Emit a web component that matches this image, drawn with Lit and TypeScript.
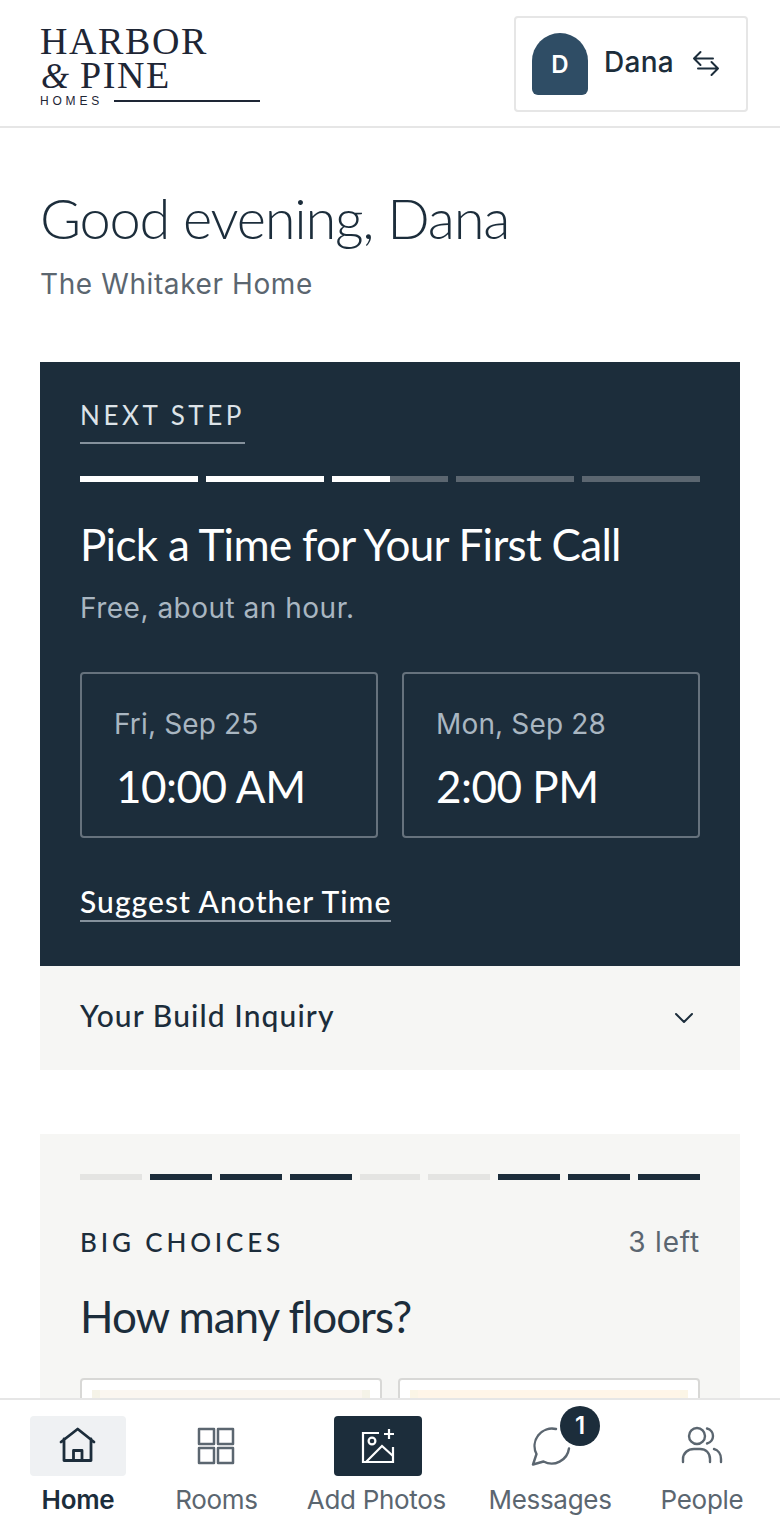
import { LitElement, html, css } from "lit";
import { customElement } from "lit/decorators.js";

const seg = (fill: number) => html`<span class="seg"><i style="width:${fill}%"></i></span>`;

@customElement("app-root")
export class AppRoot extends LitElement {
  static styles = css`
    :host { display: flex; flex-direction: column; height: 100vh; overflow: hidden; background: #fff; color: #1c2d3b; font-family: Inter, "Noto Sans", sans-serif; }
    * { box-sizing: border-box; }
    header { flex: none; height: 128px; border-bottom: 2px solid #e6e6e6; display: flex; justify-content: space-between; padding: 16px 32px 0 40px; }
    .logo { font-family: "Liberation Serif", serif; color: #1e2635; font-size: 38px; line-height: 34px; padding-top: 8px; width: 220px; letter-spacing: 1.6px; }
    .logo div:first-child, .logo .line { height: 34px; white-space: nowrap; }
    .logo em { font-size: 36px; margin: 0 11px 0 1px; letter-spacing: 0; }
    .logo-sub { display: flex; align-items: center; gap: 11px; font: 400 12px/14px "Liberation Sans", sans-serif; letter-spacing: 3.8px; margin-top: 2px; }
    .logo-sub::after { content: ""; flex: 1; height: 2px; background: #1e2635; }
    .chip { width: 234px; height: 96px; border: 2px solid #e6e6e6; border-radius: 4px; display: flex; align-items: center; padding: 0 16px; }
    .avatar { width: 56px; height: 62px; border-radius: 28px 28px 6px 6px; background: #2f4d65; color: #fff; display: flex; align-items: center; justify-content: center; font-size: 24px; font-weight: 600; }
    .chip b { font-size: 28px; font-weight: 500; margin: -4px 0 0 16px; letter-spacing: 0.3px; }
    .chip svg { margin-left: 18px; }
    main { flex: 1; min-height: 0; overflow: hidden; padding: 0 40px; }
    h1 { font: 300 56px/68px Lato, sans-serif; margin: 56px 0 0; letter-spacing: -1.25px; }
    .home { font-size: 28px; line-height: 40px; color: #5b6670; margin-top: 12px; letter-spacing: 0.6px; }
    .next { background: #1c2d3b; margin-top: 58px; padding: 38px 40px 44px; color: #fff; height: 604px; }
    .eyebrow { display: inline-block; font: 400 26px/30px Lato, sans-serif; letter-spacing: 3.55px; color: #dde3e8; padding-bottom: 12px; border-bottom: 2px solid #85919c; }
    .bars { display: grid; gap: 8px; margin-top: 32px; }
    .bars.five { grid-template-columns: 118px 118px 116px 118px 118px; }
    .bars.nine { grid-template-columns: 62px 62px 62px 62px 60px 62px 62px 62px 62px; }
    .seg { height: 6px; background: #5b6670; display: block; }
    .seg i { display: block; height: 100%; background: #fff; }
    .next h2 { font: 400 44px/56px Lato, sans-serif; margin: 34px 0 0; letter-spacing: -0.7px; }
    .next p { font-size: 28px; line-height: 40px; color: #a9b6c1; margin: 16px 0 0; letter-spacing: 0.5px; }
    .times { display: grid; grid-template-columns: 1fr 1fr; gap: 24px; margin-top: 44px; }
    .time { height: 166px; border: 2px solid #66727d; border-radius: 4px; padding: 32px; display: flex; flex-direction: column; }
    .time span { font-size: 28px; line-height: 36px; color: #a9b6c1; letter-spacing: 0.15px; }
    .time strong { font: 400 44px/56px Lato, sans-serif; margin-top: 16px; letter-spacing: -0.5px; }
    .time:first-child strong { margin-left: 2px; }
    .suggest { display: inline-block; font: 500 30px/38px Lato, sans-serif; letter-spacing: 1.05px; margin-top: 44px; border-bottom: 2px solid #85919c; }
    .acc { height: 104px; background: #f6f6f4; display: flex; align-items: center; justify-content: space-between; padding: 0 46px 0 40px; font: 500 30px/38px Lato, sans-serif; letter-spacing: 1.1px; }
    .acc span { margin-top: -6px; }
    .choices { background: #f6f6f4; margin-top: 64px; padding: 40px; }
    .choices .bars { margin-top: 0; }
    .choices .seg { background: #e4e4e2; }
    .choices .seg.on { background: #1c2d3b; }
    .row { display: flex; justify-content: space-between; align-items: center; margin-top: 44px; }
    .row b { font: 500 26px/36px Lato, sans-serif; letter-spacing: 3.85px; }
    .row span { font-size: 28px; line-height: 36px; color: #5b6670; letter-spacing: 0.8px; }
    .choices h3 { font: 400 44px/56px Lato, sans-serif; margin: 28px 0 0; letter-spacing: -1px; }
    .opts { display: grid; grid-template-columns: 1fr 1fr; gap: 16px; margin-top: 34px; }
    .opt { border: 2px solid #d8d8d6; border-radius: 4px; background: #fff; padding: 10px; height: 300px; }
    .pic { height: 200px; border: solid #f5f3e8; border-width: 0 8px; background: #fbf6f0; }
    .pic.warm { border-color: #fbf5e6; background: #fff5e8; }
    nav { flex: none; height: 128px; background: #fff; border-top: 2px solid #e6e6e6; display: flex; justify-content: space-between; padding: 16px 30px 0; }
    .tab { min-width: 96px; display: flex; flex-direction: column; align-items: center; font-size: 26px; line-height: 36px; color: #5b6670; white-space: nowrap; letter-spacing: -0.3px; }
    .ic { position: relative; width: 96px; height: 60px; border-radius: 4px; display: flex; align-items: center; justify-content: center; margin-bottom: 6px; }
    .tab.on { color: #1c2d3b; font-weight: 600; }
    .tab.on .ic { background: #eff1f3; }
    .ic.dark { width: 88px; background: #1c2d3b; margin-left: 4px; }
    .badge { position: absolute; left: 58px; top: -10px; width: 40px; height: 40px; border-radius: 50%; background: #1c2d3b; color: #fff; display: flex; align-items: center; justify-content: center; font-size: 24px; font-weight: 600; letter-spacing: 0; }
    svg { display: block; fill: none; }
  `;

  render() {
    return html`
      <header>
        <div class="logo">
          <div class="line">HARBOR</div>
          <div class="line"><em>&amp;</em>PINE</div>
          <div class="logo-sub">HOMES</div>
        </div>
        <div class="chip">
          <div class="avatar">D</div>
          <b>Dana</b>
          <svg width="30" height="30" viewBox="0 0 30 30" stroke="#1c2d3b" stroke-width="2" stroke-linecap="round" stroke-linejoin="round">
            <path d="M21 9.500H2M8.500 3 2 9.500 8.500 16" />
            <path d="M6 19.500h20M19.500 13 26 19.500 19.500 26" />
          </svg>
        </div>
      </header>
      <main>
        <h1>Good evening, Dana</h1>
        <div class="home">The Whitaker Home</div>
        <section class="next">
          <div class="eyebrow">NEXT STEP</div>
          <div class="bars five">${[100, 100, 50, 0, 0].map(seg)}</div>
          <h2>Pick a Time for Your First Call</h2>
          <p>Free, about an hour.</p>
          <div class="times">
            <div class="time"><span>Fri, Sep 25</span><strong>10:00 AM</strong></div>
            <div class="time"><span>Mon, Sep 28</span><strong>2:00 PM</strong></div>
          </div>
          <a class="suggest">Suggest Another Time</a>
        </section>
        <div class="acc"><span>Your Build Inquiry</span>
          <svg width="20" height="12" viewBox="0 0 20 12" stroke="#1c2d3b" stroke-width="2" stroke-linecap="round" stroke-linejoin="round"><path d="M2 2l8 8 8-8" /></svg>
        </div>
        <section class="choices">
          <div class="bars nine">${[0, 1, 1, 1, 0, 0, 1, 1, 1].map((o) => html`<span class="seg ${o ? "on" : ""}"></span>`)}</div>
          <div class="row"><b>BIG CHOICES</b><span>3 left</span></div>
          <h3>How many floors?</h3>
          <div class="opts"><div class="opt"><div class="pic"></div></div><div class="opt"><div class="pic warm"></div></div></div>
        </section>
      </main>
      <nav>
        <div class="tab on"><div class="ic">
          <svg width="40" height="40" viewBox="0 0 40 40" stroke="#1c2d3b" stroke-width="2.800" stroke-linecap="round" stroke-linejoin="round">
            <path d="M3 16 19.700 3 36 16M6 13v21.500h27V13M15.500 34.500v-10h8.500v10" />
          </svg></div>Home</div>
        <div class="tab"><div class="ic">
          <svg width="38" height="38" viewBox="0 0 38 38" stroke="#5b6670" stroke-width="2.500" stroke-linejoin="round">
            <rect x="2" y="2" width="15" height="15" /><rect x="21" y="2" width="15" height="15" /><rect x="2" y="21" width="15" height="15" /><rect x="21" y="21" width="15" height="15" />
          </svg></div>Rooms</div>
        <div class="tab"><div class="ic dark">
          <svg width="34" height="36" viewBox="0 0 34 36" stroke="#fff" stroke-width="2.200">
            <path d="M18 5H2v29h30V19" /><circle cx="11" cy="13" r="3.400" /><path d="M5 34 21 18l11 10M28 1v10M23 6h10" />
          </svg></div>Add Photos</div>
        <div class="tab"><div class="ic">
          <svg width="42" height="42" viewBox="0 0 42 42" stroke="#5b6670" stroke-width="2.400" stroke-linecap="round" stroke-linejoin="round">
            <path d="M27 4A17.500 17.500 0 0 0 7.500 29L4 39.500 14.500 36.500A17.500 17.500 0 0 0 40 23.500" />
          </svg><span class="badge">1</span></div>Messages</div>
        <div class="tab"><div class="ic">
          <svg width="42" height="40" viewBox="0 0 42 40" stroke="#5b6670" stroke-width="2.400" stroke-linecap="round">
            <circle cx="16" cy="10" r="8" /><path d="M26 2.500c4 1 6 4.500 6 7.500s-2 6.500-6 7.500M2 36v-3c0-6 5-10 11-10h6c6 0 10 4 10 10v3M33 23c4 1 7 5 7 10v3" />
          </svg></div>People</div>
      </nav>
    `;
  }
}
